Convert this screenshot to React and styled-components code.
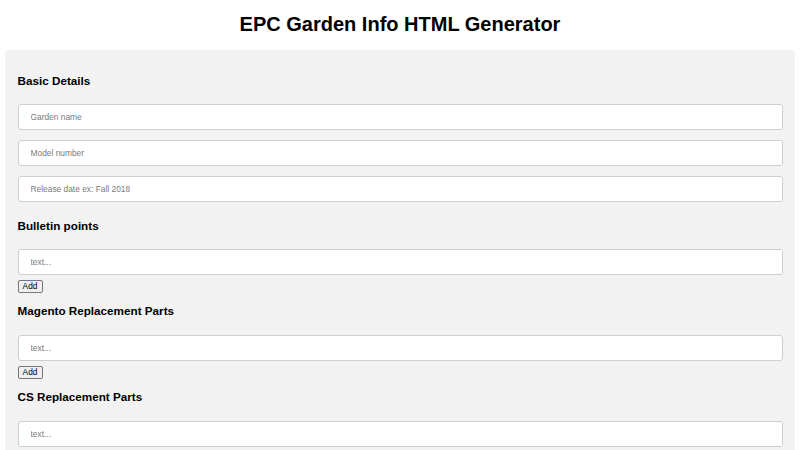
import React, { useState } from 'react';
import styled, { createGlobalStyle } from 'styled-components';

const GlobalStyle = createGlobalStyle`
  body {
    margin: 0 5px;
    font-family: "Liberation Sans", Arial, sans-serif;
    background: #ffffff;
    color: #000;
  }
`;

const Title = styled.h1`
  margin: 0;
  padding: 13px 0 13.5px;
  font-size: 20px;
  line-height: 23px;
  font-weight: bold;
  text-align: center;
`;

const Panel = styled.div`
  display: flex;
  flex-direction: column;
  background-color: #f2f2f2;
  border-radius: 4px;
  padding: 12.5px 12.5px 20px;
`;

const SectionTitle = styled.h3`
  margin: 11.7px 0;
  font-size: 11.7px;
  line-height: 13.5px;
  font-weight: bold;
`;

const Field = styled.input`
  box-sizing: border-box;
  height: 26px;
  margin: 5px 0;
  padding: 0 12px;
  border: 1px solid #cfcfcf;
  border-radius: 3px;
  background: #fff;
  font-family: "Liberation Sans", Arial, sans-serif;
  font-size: 8.4px;
  outline: none;
  &::placeholder {
    color: #7a7a7a;
  }
`;

const AddButton = styled.button`
  align-self: flex-start;
  box-sizing: border-box;
  height: 13px;
  width: 25px;
  padding: 0;
  margin: 0;
  border: 1px solid #767676;
  border-radius: 2px;
  background: #efefef;
  font-family: "Liberation Sans", Arial, sans-serif;
  font-size: 8.3px;
  line-height: 11px;
  color: #000;
`;

function ListSection({ title }) {
  const [items, setItems] = useState(['']);
  return (
    <>
      <SectionTitle>{title}</SectionTitle>
      {items.map((_, i) => (
        <Field key={i} placeholder="text..." />
      ))}
      <AddButton onClick={() => setItems([...items, ''])}>Add</AddButton>
    </>
  );
}

export default function App() {
  return (
    <>
      <GlobalStyle />
      <Title>EPC Garden Info HTML Generator</Title>
      <Panel>
        <SectionTitle>Basic Details</SectionTitle>
        <Field placeholder="Garden name" />
        <Field placeholder="Model number" />
        <Field placeholder="Release date ex: Fall 2018" />
        <ListSection title="Bulletin points" />
        <ListSection title="Magento Replacement Parts" />
        <ListSection title="CS Replacement Parts" />
      </Panel>
    </>
  );
}
